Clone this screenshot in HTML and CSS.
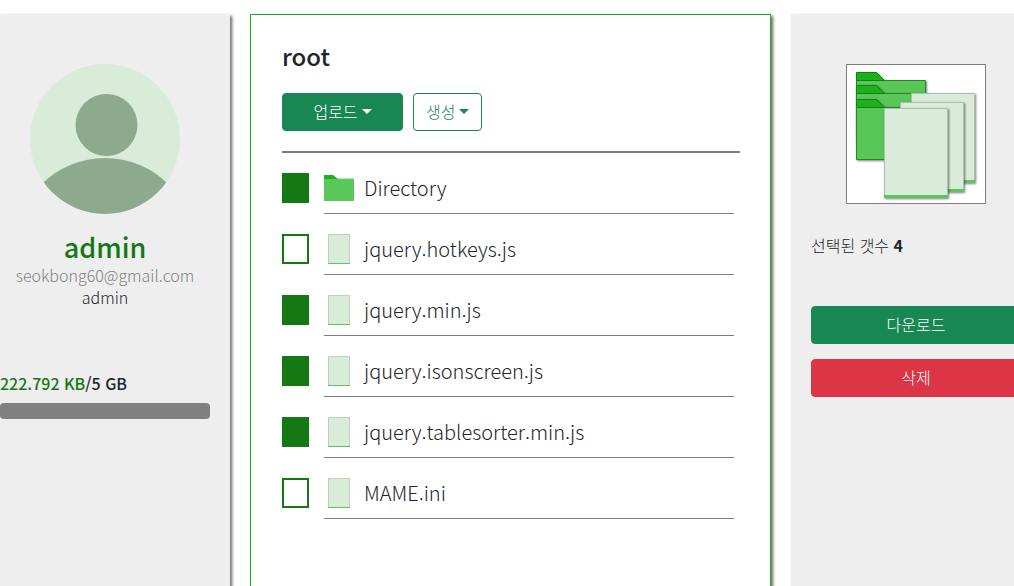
FILE: index.html
```html
<!DOCTYPE html>
<html lang="ko">
<head>
<meta charset="utf-8">
<meta name="viewport" content="width=device-width, initial-scale=1">
<title>root</title>
<link rel="stylesheet" href="styles.css">
</head>
<body>
<svg class="symbols" aria-hidden="true">
  <symbol id="folder" viewBox="0 0 30 30">
    <path d="M0 5H30V28H0Z" fill="#59c759"/>
    <path d="M12 5H30V6H13Z" fill="#b9e8b9"/>
    <path d="M0 2H9L14 6H0Z" fill="#1eb11e"/>
  </symbol>
  <symbol id="file" viewBox="0 0 30 30">
    <path d="M4 0H26V30H4Z" fill="#c1cfc1"/>
    <path d="M5 1H25V29H5Z" fill="#d9ebd9"/>
    <path d="M4 29H26V30H4Z" fill="#59c759"/>
  </symbol>
</svg>
<div class="page">
  <aside class="panel profile">
    <svg class="avatar" viewBox="0 0 150 150" role="img" aria-label="admin">
      <clipPath id="round"><circle cx="75" cy="75" r="75"/></clipPath>
      <g clip-path="url(#round)">
        <path d="M0 0H150V150H0Z" fill="#d9ebd9"/>
        <circle cx="76.500" cy="61" r="31" fill="#8eaa8e"/>
        <circle cx="75" cy="183.500" r="89.500" fill="#8eaa8e"/>
      </g>
    </svg>
    <h1 class="name">admin</h1>
    <p class="email">seokbong60@gmail.com</p>
    <p class="role">admin</p>
    <p class="usage"><span class="used">222.792 KB</span>/5 GB</p>
    <div class="meter" role="progressbar" aria-label="222.792 KB/5 GB" aria-valuenow="0"></div>
  </aside>

  <main class="panel files">
    <h2 class="title">root</h2>
    <div class="toolbar">
      <button class="btn btn-green btn-upload" type="button">업로드<span class="caret"></span></button>
      <button class="btn btn-outline" type="button">생성<span class="caret"></span></button>
    </div>
    <ul class="list">
      <li class="row"><input class="check" type="checkbox" id="f1" checked><label class="entry" for="f1"><svg class="icon"><use href="#folder"/></svg>Directory</label></li>
      <li class="row"><input class="check" type="checkbox" id="f2"><label class="entry" for="f2"><svg class="icon"><use href="#file"/></svg>jquery.hotkeys.js</label></li>
      <li class="row"><input class="check" type="checkbox" id="f3" checked><label class="entry" for="f3"><svg class="icon"><use href="#file"/></svg>jquery.min.js</label></li>
      <li class="row"><input class="check" type="checkbox" id="f4" checked><label class="entry" for="f4"><svg class="icon"><use href="#file"/></svg>jquery.isonscreen.js</label></li>
      <li class="row"><input class="check" type="checkbox" id="f5" checked><label class="entry" for="f5"><svg class="icon"><use href="#file"/></svg>jquery.tablesorter.min.js</label></li>
      <li class="row"><input class="check" type="checkbox" id="f6"><label class="entry" for="f6"><svg class="icon"><use href="#file"/></svg>MAME.ini</label></li>
    </ul>
  </main>

  <aside class="panel details">
    <svg class="preview" viewBox="0 0 138 138" aria-hidden="true">
      <defs>
        <filter id="soft" x="-10%" y="-10%" width="125%" height="125%"><feDropShadow dx="1" dy="1" stdDeviation="0.800" flood-opacity=".5"/></filter>
        <g id="stack-folder">
          <path d="M.5 .5H20.500L28.500 8.500H69.500V60.500H.5Z" fill="#59c759" stroke="#268726"/>
          <path d="M.5 .5H20.500L28.500 8.500H.5Z" fill="#1eb11e" stroke="#168016"/>
        </g>
        <g id="stack-file">
          <path d="M.5 .5H63.500V89.500H.5Z" fill="#d9ebd9" stroke="#afbfaf"/>
          <path d="M0 87H64V90H0Z" fill="#59c759"/>
        </g>
      </defs>
      <use href="#stack-folder" x="9" y="7" filter="url(#soft)"/>
      <use href="#stack-folder" x="9" y="20" filter="url(#soft)"/>
      <use href="#stack-folder" x="9" y="34" filter="url(#soft)"/>
      <use href="#stack-file" x="64" y="28" filter="url(#soft)"/>
      <use href="#stack-file" x="53" y="37" filter="url(#soft)"/>
      <use href="#stack-file" x="37" y="43" filter="url(#soft)"/>
    </svg>
    <p class="count">선택된 갯수 <strong>4</strong></p>
    <button class="btn btn-green" type="button">다운로드</button>
    <button class="btn btn-red" type="button">삭제</button>
  </aside>
</div>
</body>
</html>
```

FILE: styles.css
```css
* { box-sizing: border-box; }

body {
  margin: 0;
  color: #212529;
  background: #fff;
  font: 300 16px/24px "Noto Sans CJK KR", "Noto Sans", sans-serif;
  overflow: hidden;
}

h1, h2, p, ul { margin: 0; padding: 0; }

.symbols { display: none; }

.page {
  display: flex;
  gap: 20px;
  min-height: calc(100vh + 20px);
  margin-right: -27px;
  padding-top: 14px;
}

.panel {
  padding-top: 50px;
  background: #eee;
  box-shadow: 2px 2px 3px #666;
}

.profile {
  flex: 0 0 230px;
  display: flex;
  flex-direction: column;
  align-items: center;
  padding-right: 20px;
}

.avatar { width: 150px; height: 150px; }

.name {
  margin-top: 16px;
  color: #147814;
  font-size: 27px;
  font-weight: 500;
  line-height: 34px;
}

.email { color: #808080; line-height: 22px; }
.role { line-height: 22px; }

.usage {
  align-self: stretch;
  margin-top: 63px;
  font-weight: 500;
}

.used { color: #147814; }

.meter {
  align-self: stretch;
  height: 16px;
  margin-top: 8px;
  border-radius: 4px;
  background: #808080;
}

.files {
  flex: 1;
  padding: 24px 30px 0 31px;
  border: 1px solid #1eb11e;
  background: #fff;
}

.title {
  font-size: 24px;
  font-weight: 500;
  line-height: 34px;
}

.toolbar {
  display: flex;
  gap: 10px;
  margin-top: 20px;
  padding-bottom: 20px;
  border-bottom: 2px solid #808080;
}

.btn {
  height: 38px;
  padding: 0 12px 2px;
  border: 1px solid;
  border-radius: 4px;
  color: #fff;
  font: inherit;
}

.btn-green { border-color: #198754; background: #198754; }
.btn-red { border-color: #dc3545; background: #dc3545; }
.btn-outline { color: #198754; background: #fff; }
.btn-upload { width: 121px; }

.caret {
  display: inline-block;
  margin-left: 4px;
  vertical-align: 4px;
  border: 5px solid transparent;
  border-top-color: currentColor;
  border-bottom: 0;
}

.list {
  display: grid;
  gap: 20px;
  padding: 20px 6px 0 0;
  list-style: none;
}

.row { display: flex; gap: 15px; }

.check {
  appearance: none;
  flex: none;
  width: 27px;
  height: 30px;
  margin: 0;
  border: 2px solid #147814;
  background: #fff;
}

.check:checked { background: #147814; }

.entry {
  flex: 1;
  display: flex;
  align-items: center;
  gap: 10px;
  padding-bottom: 10px;
  border-bottom: 1px solid #808080;
  font-size: 20px;
}

.icon { width: 30px; height: 30px; }

.details {
  flex: 0 0 250px;
  display: flex;
  flex-direction: column;
  padding: 50px 20px 0;
}

.preview {
  align-self: center;
  width: 140px;
  height: 140px;
  border: 1px solid #808080;
  background: #fff;
}

.count { margin: 29px 0 49px; }

.count strong { font-weight: 700; }

.details .btn + .btn { margin-top: 15px; }
```
